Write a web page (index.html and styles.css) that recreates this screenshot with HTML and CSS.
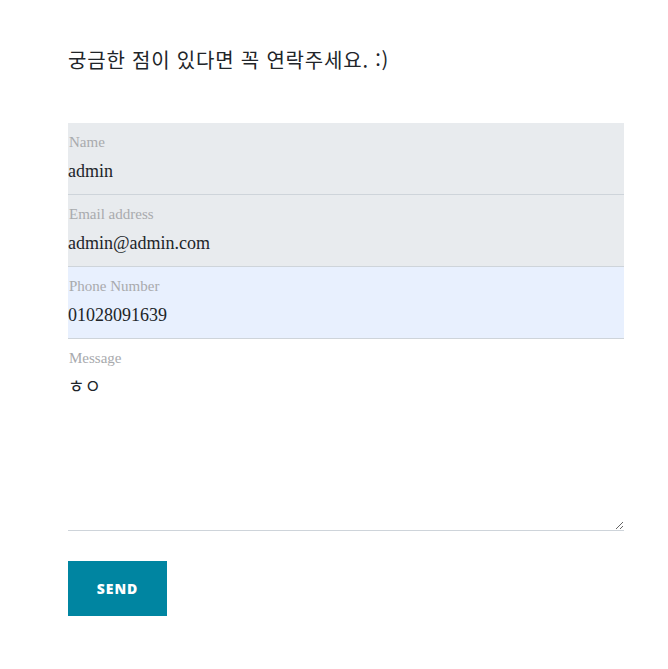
FILE: index.html
```html
<!DOCTYPE html>
<html lang="ko">
<head>
<meta charset="utf-8">
<title>Contact</title>
<link rel="stylesheet" href="styles.css">
</head>
<body>
<main class="page">
  <p class="intro">궁금한 점이 있다면 꼭 연락주세요. :)</p>
  <form class="contact-form">
    <div class="field field-gray">
      <label class="field-label" for="name">Name</label>
      <input class="field-input" id="name" type="text" value="admin">
    </div>
    <div class="field field-gray">
      <label class="field-label" for="email">Email address</label>
      <input class="field-input" id="email" type="email" value="admin@admin.com">
    </div>
    <div class="field field-blue">
      <label class="field-label" for="phone">Phone Number</label>
      <input class="field-input" id="phone" type="tel" value="01028091639">
    </div>
    <div class="field field-message">
      <label class="field-label" for="message">Message</label>
      <textarea class="field-input field-textarea" id="message">ㅎㅇ</textarea>
    </div>
    <button class="send-btn" type="button">Send</button>
  </form>
</main>
</body>
</html>
```
FILE: styles.css
```css
html, body {
  margin: 0;
  padding: 0;
  background: #ffffff;
}

.page {
  padding: 46px 44px 40px 68px;
  width: 556px;
}

.intro {
  margin: 0 0 49px;
  font-family: "Noto Sans CJK KR", "Noto Sans", sans-serif;
  font-size: 20px;
  letter-spacing: 0.8px;
  line-height: 28px;
  color: #212529;
}

.contact-form {
  display: flex;
  flex-direction: column;
  align-items: flex-start;
}

.field {
  align-self: stretch;
  display: flex;
  flex-direction: column;
  padding: 9px 0 11px;
  border-bottom: 1px solid #ced4da;
}

.field-gray {
  background: #e8ebee;
}

.field-blue {
  background: #e8f0fe;
}

.field-message {
  padding-bottom: 0;
  background: #ffffff;
}

.field-label {
  display: block;
  margin: 0 0 7px 1px;
  font-family: "Liberation Serif", serif;
  font-size: 15px;
  line-height: 20px;
  color: #a8aaad;
}

.field-input {
  display: block;
  margin: 0;
  padding: 0;
  border: none;
  outline: none;
  background: transparent;
  font-family: "Liberation Serif", "Noto Sans CJK KR", serif;
  font-size: 18px;
  line-height: 24px;
  height: 24px;
  color: #212529;
}

.field-textarea {
  height: 155px;
  resize: both;
  width: 100%;
  box-sizing: border-box;
}

.send-btn {
  margin-top: 30px;
  width: 99px;
  height: 55px;
  border: none;
  border-radius: 0;
  background: #0085a1;
  color: #ffffff;
  font-family: "Open Sans", sans-serif;
  font-weight: 800;
  font-size: 14px;
  letter-spacing: 1px;
  text-transform: uppercase;
  cursor: pointer;
}
```
